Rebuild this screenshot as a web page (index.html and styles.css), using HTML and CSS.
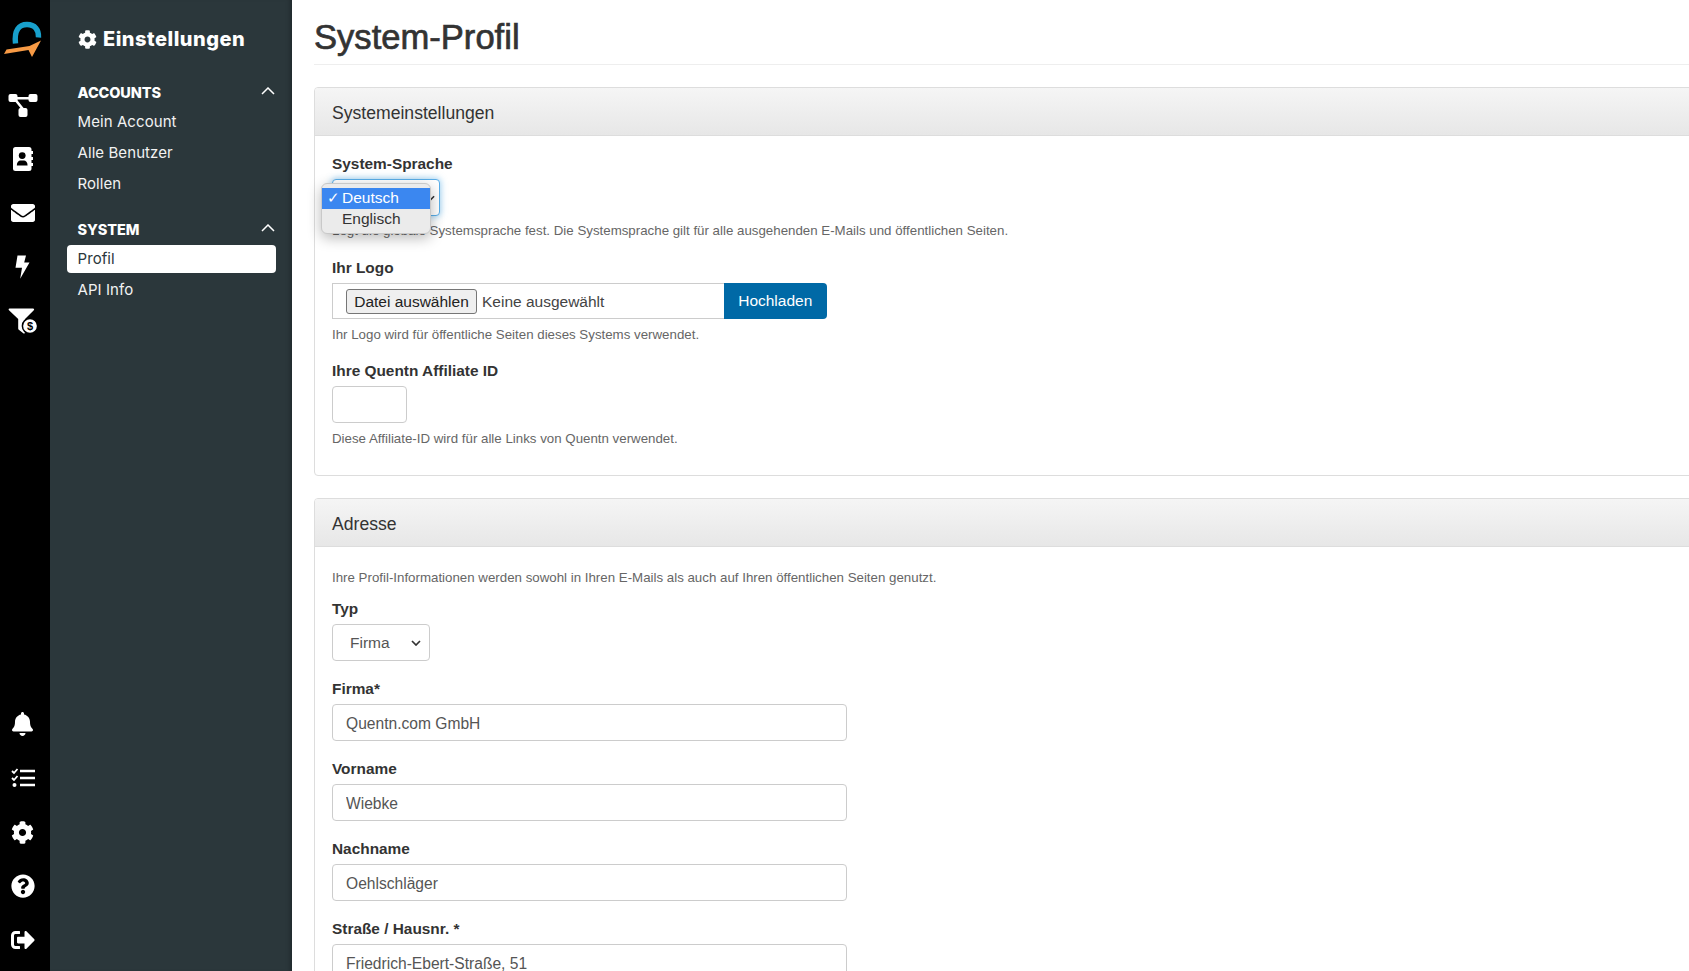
FILE: index.html
```html
<!DOCTYPE html>
<html lang="de">
<head>
<meta charset="utf-8">
<title>System-Profil</title>
<link rel="stylesheet" href="styles.css">
</head>
<body>
<div class="app">
  <nav class="rail">
    <div class="rail-group">
      <a class="logo">
        <svg width="50" height="78" viewBox="0 0 50 78">
          <path d="M15.500 43.500 C14 30 19 24.500 27 24.500 C35 24.500 39 30 38.500 37.500" fill="none" stroke="#18a0cc" stroke-width="5.400"/>
          <path d="M4 54 L6.500 49.500 L29.500 46 L41 40.500 L32 57 L28.500 50 Z" fill="#f79a45"/>
        </svg>
      </a>
      <a class="rail-item">
        <svg width="30" height="24" viewBox="0 0 30 24" fill="#fff">
          <rect x="0.500" y="1" width="9" height="8" rx="2"/><rect x="20.500" y="1" width="9" height="8" rx="2"/><rect x="10.500" y="15" width="9" height="9" rx="2"/>
          <path d="M8 4h14v2.400H8zM6 7l2-1.600 8 10-2 1.600z"/>
        </svg>
      </a>
      <a class="rail-item">
        <svg width="20" height="24" viewBox="0 0 20 24">
          <rect x="0" y="0" width="18.500" height="24" rx="2.500" fill="#fff"/>
          <path d="M18 4h2v3h-2zM18 10h2v3h-2zM18 16h2v3h-2z" fill="#fff"/>
          <circle cx="9.200" cy="8.600" r="3.400" fill="#000"/>
          <path d="M3.800 18.400c0-3.200 2-5 3.600-5h3.600c1.600 0 3.600 1.800 3.600 5z" fill="#000"/>
        </svg>
      </a>
      <a class="rail-item">
        <svg width="24" height="24" viewBox="0 0 512 512" fill="#fff"><path d="M502.300 190.800c3.900-3.100 9.700-.2 9.700 4.700V400c0 26.500-21.500 48-48 48H48c-26.500 0-48-21.500-48-48V195.600c0-5 5.700-7.800 9.700-4.700 22.400 17.400 52.100 39.500 154.100 113.600 21.100 15.400 56.700 47.800 92.200 47.600 35.700.3 72-32.800 92.300-47.600 102-74.100 131.600-96.300 154-113.700zM256 320c23.200.4 56.600-29.200 73.400-41.400 132.700-96.300 142.800-104.700 173.400-128.700 5.800-4.500 9.200-11.500 9.200-18.900v-19c0-26.500-21.500-48-48-48H48C21.500 64 0 85.500 0 112v19c0 7.400 3.400 14.300 9.200 18.900 30.600 23.900 40.700 32.400 173.400 128.700 16.800 12.200 50.200 41.800 73.400 41.400z"/></svg>
      </a>
      <a class="rail-item">
        <svg width="15" height="24" viewBox="0 0 15 24" fill="#fff"><path d="M2.500 0.500H11L9.200 7.600H14.500L5.200 23.800 7 12.800H0.500z"/></svg>
      </a>
      <a class="rail-item">
        <svg width="30" height="26" viewBox="0 0 30 26">
          <path d="M1.500 0.500H25c1 0 1.500 1 .8 1.800L17 11v13.500c0 1-1 1.300-1.700.8l-4.500-3.500c-.4-.3-.6-.7-.6-1.200V11L1 2.300C.3 1.500.7.500 1.500.500z" fill="#fff"/>
          <circle cx="22" cy="18" r="7.600" fill="#fff" stroke="#000" stroke-width="1.500"/>
          <text x="22" y="22" class="badge-dollar">$</text>
        </svg>
      </a>
    </div>
    <div class="rail-group rail-bottom">
      <a class="rail-item">
        <svg width="21" height="24" viewBox="0 0 448 512" fill="#fff"><path d="M224 512c35.320 0 63.970-28.650 63.970-64H160.030c0 35.350 28.650 64 63.970 64zm215.390-149.710c-19.320-20.760-55.470-51.990-55.470-154.290 0-77.700-54.480-139.900-127.940-155.160V32c0-17.670-14.320-32-31.980-32s-31.980 14.330-31.980 32v20.840C118.560 68.100 64.080 130.300 64.080 208c0 102.300-36.150 133.530-55.470 154.290-6 6.450-8.660 14.160-8.610 21.710.11 16.400 12.980 32 32.100 32h383.800c19.120 0 32-15.600 32.100-32 .05-7.550-2.610-15.270-8.610-21.710z"/></svg>
      </a>
      <a class="rail-item">
        <svg width="24" height="20" viewBox="0 0 24 20" fill="none" stroke="#fff">
          <path d="M1 3l2 2 3.500-4M1 10l2 2 3.500-4" stroke-width="1.800"/>
          <path d="M9 3h15M9 10h15M9 17h15" stroke-width="2.600"/>
          <circle cx="3.500" cy="17" r="2" fill="#fff" stroke="none"/>
        </svg>
      </a>
      <a class="rail-item">
        <svg width="23" height="23" viewBox="0 0 512 512" fill="#fff"><path d="M487.400 315.700l-42.600-24.600c4.300-23.200 4.300-47 0-70.200l42.600-24.600c4.900-2.800 7.100-8.600 5.500-14-11.100-35.600-30-67.800-54.700-94.600-3.800-4.100-10-5.100-14.800-2.300L380.800 110c-17.900-15.400-38.500-27.300-60.800-35.100V25.800c0-5.600-3.900-10.500-9.400-11.700-36.700-8.200-74.300-7.800-109.200 0-5.500 1.200-9.400 6.100-9.400 11.700V75c-22.200 7.900-42.800 19.800-60.800 35.100L88.700 85.500c-4.900-2.800-11-1.900-14.800 2.300-24.700 26.700-43.600 58.900-54.700 94.600-1.700 5.400.6 11.200 5.500 14L67.300 221c-4.300 23.200-4.300 47 0 70.200l-42.600 24.600c-4.900 2.800-7.100 8.600-5.500 14 11.100 35.600 30 67.800 54.700 94.600 3.800 4.100 10 5.100 14.800 2.300l42.600-24.600c17.900 15.400 38.500 27.300 60.800 35.100v49.200c0 5.600 3.900 10.500 9.400 11.700 36.700 8.200 74.300 7.800 109.200 0 5.500-1.200 9.400-6.100 9.400-11.700v-49.200c22.200-7.900 42.800-19.800 60.800-35.100l42.600 24.600c4.900 2.800 11 1.900 14.800-2.300 24.700-26.700 43.600-58.900 54.700-94.600 1.500-5.500-.7-11.300-5.600-14.100zM256 336c-44.100 0-80-35.900-80-80s35.900-80 80-80 80 35.900 80 80-35.900 80-80 80z"/></svg>
      </a>
      <a class="rail-item">
        <svg width="24" height="24" viewBox="0 0 512 512" fill="#fff"><path d="M504 256c0 136.997-111.043 248-248 248S8 392.997 8 256C8 119.083 119.043 8 256 8s248 111.083 248 248zM262.655 90c-54.497 0-89.255 22.957-116.549 63.758-3.536 5.286-2.353 12.415 2.715 16.258l34.699 26.310c5.205 3.947 12.621 3.008 16.665-2.122 17.864-22.658 30.113-35.797 57.303-35.797 20.429 0 45.698 13.148 45.698 32.958 0 14.976-12.363 22.667-32.534 33.976C247.128 238.528 216 254.941 216 296v4c0 6.627 5.373 12 12 12h56c6.627 0 12-5.373 12-12v-1.333c0-28.462 83.186-29.647 83.186-106.667 0-58.002-60.165-102-116.531-102zM256 338c-25.365 0-46 20.635-46 46 0 25.364 20.635 46 46 46s46-20.636 46-46c0-25.365-20.635-46-46-46z"/></svg>
      </a>
      <a class="rail-item">
        <svg width="24" height="24" viewBox="0 0 512 512" fill="#fff"><path d="M497 273L329 441c-15 15-41 4.500-41-17v-96H152c-13.300 0-24-10.700-24-24v-96c0-13.300 10.700-24 24-24h136V88c0-21.400 25.900-32 41-17l168 168c9.300 9.400 9.300 24.600 0 34zM192 436v-40c0-6.600-5.400-12-12-12H96c-17.700 0-32-14.300-32-32V160c0-17.700 14.300-32 32-32h84c6.600 0 12-5.400 12-12V76c0-6.600-5.400-12-12-12H96c-53 0-96 43-96 96v192c0 53 43 96 96 96h84c6.600 0 12-5.400 12-12z"/></svg>
      </a>
    </div>
  </nav>

  <aside class="sidebar">
    <h2 class="side-title">
      <svg width="19" height="19" viewBox="0 0 512 512" fill="#fff"><path d="M487.400 315.700l-42.600-24.600c4.300-23.200 4.300-47 0-70.200l42.600-24.600c4.900-2.800 7.100-8.600 5.500-14-11.100-35.600-30-67.800-54.700-94.600-3.800-4.100-10-5.100-14.800-2.300L380.800 110c-17.900-15.400-38.500-27.300-60.800-35.100V25.800c0-5.600-3.900-10.500-9.400-11.700-36.700-8.200-74.300-7.800-109.200 0-5.500 1.200-9.400 6.100-9.400 11.700V75c-22.200 7.900-42.800 19.800-60.800 35.100L88.700 85.500c-4.900-2.800-11-1.900-14.800 2.300-24.700 26.700-43.600 58.900-54.700 94.600-1.700 5.400.6 11.200 5.500 14L67.300 221c-4.300 23.200-4.300 47 0 70.200l-42.600 24.600c-4.900 2.800-7.100 8.600-5.500 14 11.100 35.600 30 67.800 54.700 94.600 3.800 4.100 10 5.100 14.800 2.300l42.600-24.600c17.900 15.400 38.500 27.300 60.800 35.100v49.200c0 5.600 3.900 10.500 9.400 11.700 36.700 8.200 74.300 7.800 109.200 0 5.500-1.200 9.400-6.100 9.400-11.700v-49.200c22.200-7.900 42.800-19.800 60.800-35.100l42.600 24.600c4.900 2.800 11 1.900 14.800-2.300 24.700-26.700 43.600-58.900 54.700-94.600 1.500-5.500-.7-11.300-5.600-14.100zM256 336c-44.100 0-80-35.900-80-80s35.900-80 80-80 80 35.900 80 80-35.900 80-80 80z"/></svg>
      <span>Einstellungen</span>
    </h2>
    <div class="side-section">
      <div class="side-head"><span>ACCOUNTS</span><svg width="14" height="8" viewBox="0 0 14 8" fill="none" stroke="#fff" stroke-width="1.500"><path d="M1 7l6-6 6 6"/></svg></div>
      <a class="side-link">Mein Account</a>
      <a class="side-link">Alle Benutzer</a>
      <a class="side-link">Rollen</a>
    </div>
    <div class="side-section">
      <div class="side-head side-head-tight"><span>SYSTEM</span><svg width="14" height="8" viewBox="0 0 14 8" fill="none" stroke="#fff" stroke-width="1.500"><path d="M1 7l6-6 6 6"/></svg></div>
      <a class="side-link active">Profil</a>
      <a class="side-link">API Info</a>
    </div>
  </aside>

  <main class="main">
    <h1 class="page-title">System-Profil</h1>

    <section class="panel">
      <header class="panel-head">Systemeinstellungen</header>
      <div class="panel-body">
        <div class="group group-first">
          <label class="label">System-Sprache</label>
          <div class="select-wrap">
            <div class="fake-select focused"><svg width="9" height="6" viewBox="0 0 10 6" fill="none" stroke="#333" stroke-width="1.700"><path d="M1 1l4 4 4-4"/></svg></div>
            <ul class="dropdown">
              <li class="option selected"><span class="check">✓</span>Deutsch</li>
              <li class="option"><span class="check"></span>Englisch</li>
            </ul>
          </div>
          <p class="help">Legt die globale Systemsprache fest. Die Systemsprache gilt für alle ausgehenden E-Mails und öffentlichen Seiten.</p>
        </div>
        <div class="group">
          <label class="label">Ihr Logo</label>
          <div class="file-row">
            <div class="file-box">
              <button class="file-btn" type="button">Datei auswählen</button>
              <span class="file-name">Keine ausgewählt</span>
            </div>
            <button class="upload" type="button">Hochladen</button>
          </div>
          <p class="help help-loose">Ihr Logo wird für öffentliche Seiten dieses Systems verwendet.</p>
        </div>
        <div class="group">
          <label class="label">Ihre Quentn Affiliate ID</label>
          <input class="input input-small" type="text">
          <p class="help help-loose">Diese Affiliate-ID wird für alle Links von Quentn verwendet.</p>
        </div>
      </div>
    </section>

    <section class="panel">
      <header class="panel-head">Adresse</header>
      <div class="panel-body panel-body-intro">
        <p class="help intro">Ihre Profil-Informationen werden sowohl in Ihren E-Mails als auch auf Ihren öffentlichen Seiten genutzt.</p>
        <div class="group group-form">
          <label class="label">Typ</label>
          <div class="fake-select type-select"><span>Firma</span><svg width="10" height="6" viewBox="0 0 10 6" fill="none" stroke="#333" stroke-width="1.700"><path d="M1 1l4 4 4-4"/></svg></div>
        </div>
        <div class="group group-form">
          <label class="label">Firma*</label>
          <input class="input" type="text" value="Quentn.com GmbH">
        </div>
        <div class="group group-form">
          <label class="label">Vorname</label>
          <input class="input" type="text" value="Wiebke">
        </div>
        <div class="group group-form">
          <label class="label">Nachname</label>
          <input class="input" type="text" value="Oehlschläger">
        </div>
        <div class="group group-form">
          <label class="label">Straße / Hausnr. *</label>
          <input class="input" type="text" value="Friedrich-Ebert-Straße, 51">
        </div>
      </div>
    </section>
  </main>
</div>
</body>
</html>
```
FILE: styles.css
```css
* { box-sizing: border-box; }
html, body { margin: 0; height: 100%; overflow: hidden; background: #fff; }
body { font-family: "Liberation Sans", Arial, sans-serif; color: #333; }

.app { display: flex; height: 971px; width: 1689px; overflow: hidden; }

/* icon rail */
.rail { flex: 0 0 50px; background: #000; display: flex; flex-direction: column; justify-content: space-between; padding-bottom: 4px; }
.rail-group { display: flex; flex-direction: column; align-items: center; }
.logo { display: block; height: 78px; width: 50px; }
.rail-item { height: 54px; width: 50px; padding-right: 5px; display: flex; align-items: center; justify-content: center; }
.badge-dollar { font: 700 11px "Liberation Sans", sans-serif; fill: #000; text-anchor: middle; }

/* sidebar */
.sidebar { flex: 0 0 242px; background: #2b373b; color: #fff; font-family: Inter, "Liberation Sans", sans-serif; box-shadow: inset -5px 0 5px -4px rgba(0,0,0,.35); padding: 0 16px 0 17px; }
.side-title { margin: 0; height: 77px; padding: 1px 0 0 10.5px; display: flex; align-items: center; gap: 6.5px; font-size: 20px; font-weight: 800; letter-spacing: .5px; }
.side-section { margin-bottom: 16.5px; }
.side-head { display: flex; justify-content: space-between; align-items: center; height: 30px; margin-bottom: 1px; padding: 0 1px 0 10.5px; font-size: 14.5px; font-weight: 800; letter-spacing: -.1px; }
.side-head-tight { margin-bottom: 0; }
.side-head svg { margin-top: -3px; }
.side-link { display: block; height: 28px; margin-bottom: 3px; line-height: 28px; padding-left: 10.5px; font-size: 15px; letter-spacing: .08px; border-radius: 4px; color: #f2f2f2; }
.side-link.active { background: #fff; color: #2b373b; }

/* main */
.main { flex: 1; min-width: 0; padding: 0 0 0 22px; overflow: hidden; }
.page-title { margin: 0 -40px 22px 0; height: 65px; border-bottom: 1px solid #eee; padding-top: 17px; line-height: 40px; font-size: 34.6px; font-weight: 400; color: #333; -webkit-text-stroke: .7px #333; }

.panel { width: calc(100% + 40px); border: 1px solid #ddd; border-radius: 4px; margin-bottom: 22px; }
.panel-head { height: 48px; padding: 2px 0 0 17px; line-height: 46px; font-size: 17.6px; color: #333; background: linear-gradient(#f5f5f5, #e7e7e7); border-bottom: 1px solid #ddd; border-radius: 3px 3px 0 0; }
.panel-body { padding: 17px 17px 11.5px; }
.panel-body-intro { padding-top: 21px; }

.group { margin-bottom: 15px; }
.group-first { margin-bottom: 15.5px; }
.group-form { margin-bottom: 17px; }
.label { display: block; height: 21px; line-height: 21px; margin-bottom: 5px; font-size: 15.4px; font-weight: 700; color: #333; }
.help { margin: 5px 0 0; height: 20px; line-height: 20px; font-size: 13.3px; color: #666; }
.help-loose { margin-top: 6px; }
.intro { margin: 0 0 10px; }

.select-wrap { position: relative; width: 108px; }
.fake-select { height: 37px; background: #fff; border: 1px solid #ccc; border-radius: 4px; }
.focused { display: flex; align-items: center; justify-content: flex-end; padding-right: 4px; border-color: #5aaee8; box-shadow: 0 0 6px 1px rgba(90,174,232,.55); width: 108px; }
.type-select { width: 98px; display: flex; align-items: center; justify-content: space-between; padding: 1px 8px 0 17px; font-size: 15.5px; color: #555; }

.dropdown { position: absolute; left: -11px; top: 4px; width: 110px; height: 51px; margin: 0; padding: 4px 0; list-style: none; background: #ebebeb; border: 1px solid #c9c9c9; border-radius: 6px; box-shadow: 0 4px 14px rgba(0,0,0,.28); font-size: 15.5px; color: #333; }
.option { height: 21px; line-height: 20px; display: flex; }
.option.selected { background: #3b87f0; color: #fff; }
.check { width: 20px; text-align: center; padding-left: 3px; font-size: 14.5px; }

.file-row { display: flex; height: 36px; width: 495px; }
.file-box { flex: 1; display: flex; align-items: center; gap: 5px; padding: 2px 0 0 13px; border: 1px solid #ccc; border-right: 0; font-size: 15.5px; color: #444; }
.file-btn { height: 25px; width: 131px; padding: 0; font: 15.5px "Liberation Sans", sans-serif; color: #222; background: #efefef; border: 1px solid #767676; border-radius: 3px; }
.upload { width: 103.5px; padding: 0; background: #0069a6; border: 0; border-radius: 0 4px 4px 0; color: #fff; font: 15.5px "Liberation Sans", sans-serif; }

.input { display: block; width: 515px; height: 37px; padding: 2px 13px 0; border: 1px solid #ccc; border-radius: 4px; font: 15.6px "Liberation Sans", sans-serif; color: #555; background: #fff; outline: 0; }
.input-small { width: 75px; }
```
